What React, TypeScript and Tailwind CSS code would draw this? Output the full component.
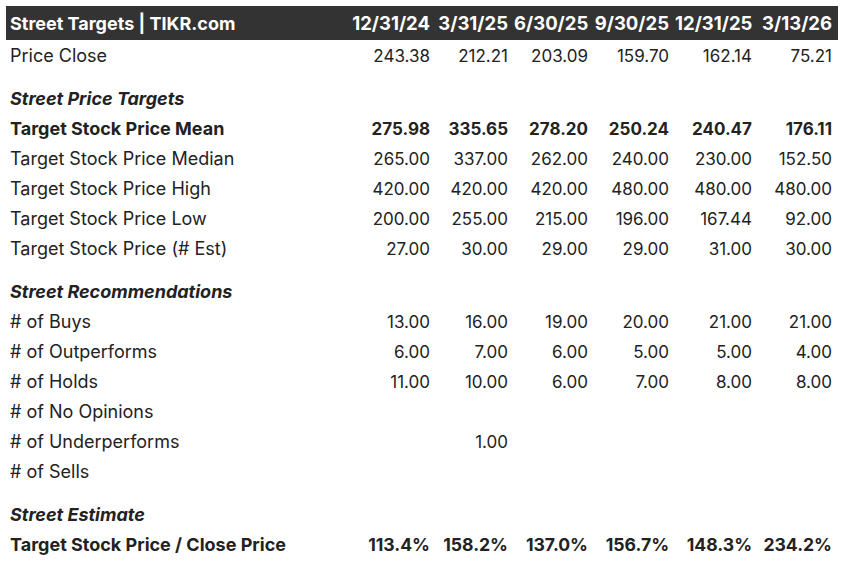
const dates = ["12/31/24", "3/31/25", "6/30/25", "9/30/25", "12/31/25", "3/13/26"];
const widths = ["w-[78px]", "w-[80px]", "w-[81px]", "w-[83px]", "w-[80px]"];

type Row =
  | { kind: "section"; label: string }
  | { kind: "data"; label: string; values: string[]; bold?: boolean; pct?: boolean };

const rows: Row[] = [
  { kind: "data", label: "Price Close", values: ["243.38", "212.21", "203.09", "159.70", "162.14", "75.21"] },
  { kind: "section", label: "Street Price Targets" },
  { kind: "data", label: "Target Stock Price Mean", bold: true, values: ["275.98", "335.65", "278.20", "250.24", "240.47", "176.11"] },
  { kind: "data", label: "Target Stock Price Median", values: ["265.00", "337.00", "262.00", "240.00", "230.00", "152.50"] },
  { kind: "data", label: "Target Stock Price High", values: ["420.00", "420.00", "420.00", "480.00", "480.00", "480.00"] },
  { kind: "data", label: "Target Stock Price Low", values: ["200.00", "255.00", "215.00", "196.00", "167.44", "92.00"] },
  { kind: "data", label: "Target Stock Price (# Est)", values: ["27.00", "30.00", "29.00", "29.00", "31.00", "30.00"] },
  { kind: "section", label: "Street Recommendations" },
  { kind: "data", label: "# of Buys", values: ["13.00", "16.00", "19.00", "20.00", "21.00", "21.00"] },
  { kind: "data", label: "# of Outperforms", values: ["6.00", "7.00", "6.00", "5.00", "5.00", "4.00"] },
  { kind: "data", label: "# of Holds", values: ["11.00", "10.00", "6.00", "7.00", "8.00", "8.00"] },
  { kind: "data", label: "# of No Opinions", values: ["", "", "", "", "", ""] },
  { kind: "data", label: "# of Underperforms", values: ["", "1.00", "", "", "", ""] },
  { kind: "data", label: "# of Sells", values: ["", "", "", "", "", ""] },
  { kind: "section", label: "Street Estimate" },
  { kind: "data", label: "Target Stock Price / Close Price", bold: true, pct: true, values: ["113.4%", "158.2%", "137.0%", "156.7%", "148.3%", "234.2%"] },
];

function Cells({ values, className }: { values: string[]; className: string }) {
  return (
    <>
      {values.map((v, i) => (
        <div
          key={i}
          className={"pr-[6px] text-right " + (i === 0 ? "flex-1 " : widths[i - 1] + " ") + className}
        >
          {v}
        </div>
      ))}
    </>
  );
}

export default function App() {
  return (
    <div className="min-h-[566px] w-[844px] bg-white px-[6px] pt-[6px] font-['Inter',sans-serif] text-[18px] text-[#222]">
      <div className="flex h-[34px] items-baseline bg-[#333333] pt-[1px] font-bold leading-[33px] text-white">
        <div className="w-[330px] pl-[4px]">Street Targets | TIKR.com</div>
        <Cells values={dates} className="text-[18.5px]" />
      </div>
      <div className="pt-[1px]">
        {rows.map((r) =>
          r.kind === "section" ? (
            <div key={r.label} className="h-[43px] pt-[13px] pl-[4px] font-bold italic leading-[30px]">
              {r.label}
            </div>
          ) : (
            <div key={r.label} className={"flex h-[30px] items-baseline leading-[30px] " + (r.bold ? "font-bold" : "")}>
              <div className="w-[330px] pl-[4px]">{r.label}</div>
              <Cells values={r.values} className={r.pct ? "text-[17.6px]" : "text-[17px]"} />
            </div>
          )
        )}
      </div>
    </div>
  );
}
